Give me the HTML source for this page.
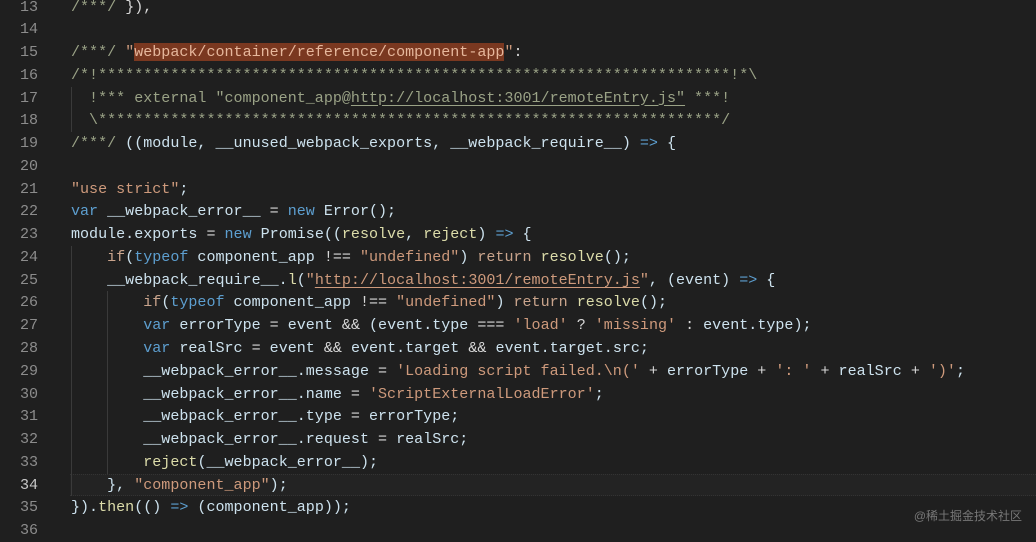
<!DOCTYPE html>
<html><head><meta charset="utf-8"><style>
html,body{margin:0;padding:0;background:#1f1f1f;width:1036px;height:537px;overflow:hidden}
#ed{position:absolute;left:0;top:-4.5px;width:1036px;font-family:"Liberation Mono",monospace;font-size:15.05px;}
.l{position:relative;height:22.78px;line-height:22.78px;white-space:pre;color:#cde2ee}
.n{position:absolute;left:0;width:38px;text-align:right;color:#8c8c8c}
.c{position:absolute;left:71px}
.cm{color:#9aa286}
.s{color:#ce9a7c}
.k{color:#5d9fd0}
.kw{color:#c9a48c}
.f{color:#dcdcaa}
.o{color:#d8d8d8}
.u{text-decoration:underline;text-underline-offset:3px}
.hl{background:#7a3820;color:#e6b79c}
.cur{position:absolute;left:70px;right:0;top:0;bottom:0;background:#232323;border-top:1px dotted #333;border-bottom:1px dotted #333}
.g{position:absolute;top:0;bottom:0;border-left:1px solid #3a3a3a}
.wm{position:absolute;right:14px;top:507px;font-family:"Liberation Sans","Noto Sans CJK SC",sans-serif;font-size:12px;color:#777}
</style></head><body>
<div id="ed">
<div class="l"><span class="n">13</span><span class="c"><span class="cm">/***/</span> <span class="o">}),</span></span></div>
<div class="l"><span class="n">14</span></div>
<div class="l"><span class="n">15</span><span class="c"><span class="cm">/***/</span> <span class="s">"<span class="hl">webpack/container/reference/component-app</span>"</span><span class="o">:</span></span></div>
<div class="l"><span class="n">16</span><span class="c cm">/*!**********************************************************************!*\</span></div>
<div class="l"><span class="n">17</span><span class="g" style="left:71px"></span><span class="c cm">  !*** external "component_app@<span class="u">http://localhost:3001/remoteEntry.js"</span> ***!</span></div>
<div class="l"><span class="n">18</span><span class="g" style="left:71px"></span><span class="c cm">  \*********************************************************************/</span></div>
<div class="l"><span class="n">19</span><span class="c"><span class="cm">/***/</span> ((module, __unused_webpack_exports, __webpack_require__) <span class="k">=&gt;</span> {</span></div>
<div class="l"><span class="n">20</span></div>
<div class="l"><span class="n">21</span><span class="c"><span class="s">"use strict"</span>;</span></div>
<div class="l"><span class="n">22</span><span class="c"><span class="k">var</span> __webpack_error__ <span class="o">=</span> <span class="k">new</span> Error();</span></div>
<div class="l"><span class="n">23</span><span class="c">module.exports <span class="o">=</span> <span class="k">new</span> Promise((<span class="f">resolve</span>, <span class="f">reject</span>) <span class="k">=&gt;</span> {</span></div>
<div class="l"><span class="n">24</span><span class="g" style="left:71px"></span><span class="c">    <span class="kw">if</span>(<span class="k">typeof</span> component_app <span class="o">!==</span> <span class="s">"undefined"</span>) <span class="kw">return</span> <span class="f">resolve</span>();</span></div>
<div class="l"><span class="n">25</span><span class="g" style="left:71px"></span><span class="c">    __webpack_require__.<span class="f">l</span>(<span class="s">"<span class="u">http://localhost:3001/remoteEntry.js</span>"</span>, (event) <span class="k">=&gt;</span> {</span></div>
<div class="l"><span class="n">26</span><span class="g" style="left:71px"></span><span class="g" style="left:107px"></span><span class="c">        <span class="kw">if</span>(<span class="k">typeof</span> component_app <span class="o">!==</span> <span class="s">"undefined"</span>) <span class="kw">return</span> <span class="f">resolve</span>();</span></div>
<div class="l"><span class="n">27</span><span class="g" style="left:71px"></span><span class="g" style="left:107px"></span><span class="c">        <span class="k">var</span> errorType <span class="o">=</span> event <span class="o">&amp;&amp;</span> (event.type <span class="o">===</span> <span class="s">'load'</span> <span class="o">?</span> <span class="s">'missing'</span> <span class="o">:</span> event.type);</span></div>
<div class="l"><span class="n">28</span><span class="g" style="left:71px"></span><span class="g" style="left:107px"></span><span class="c">        <span class="k">var</span> realSrc <span class="o">=</span> event <span class="o">&amp;&amp;</span> event.target <span class="o">&amp;&amp;</span> event.target.src;</span></div>
<div class="l"><span class="n">29</span><span class="g" style="left:71px"></span><span class="g" style="left:107px"></span><span class="c">        __webpack_error__.message <span class="o">=</span> <span class="s">'Loading script failed.\n('</span> <span class="o">+</span> errorType <span class="o">+</span> <span class="s">': '</span> <span class="o">+</span> realSrc <span class="o">+</span> <span class="s">')'</span>;</span></div>
<div class="l"><span class="n">30</span><span class="g" style="left:71px"></span><span class="g" style="left:107px"></span><span class="c">        __webpack_error__.name <span class="o">=</span> <span class="s">'ScriptExternalLoadError'</span>;</span></div>
<div class="l"><span class="n">31</span><span class="g" style="left:71px"></span><span class="g" style="left:107px"></span><span class="c">        __webpack_error__.type <span class="o">=</span> errorType;</span></div>
<div class="l"><span class="n">32</span><span class="g" style="left:71px"></span><span class="g" style="left:107px"></span><span class="c">        __webpack_error__.request <span class="o">=</span> realSrc;</span></div>
<div class="l"><span class="n">33</span><span class="g" style="left:71px"></span><span class="g" style="left:107px"></span><span class="c">        <span class="f">reject</span>(__webpack_error__);</span></div>
<div class="l"><span class="cur"></span><span class="n" style="color:#c8c8c8">34</span><span class="g" style="left:71px"></span><span class="c">    }, <span class="s">"component_app"</span>);</span></div>
<div class="l"><span class="n">35</span><span class="c">}).<span class="f">then</span>(() <span class="k">=&gt;</span> (component_app));</span></div>
<div class="l"><span class="n">36</span></div>
</div>
<div class="wm">@稀土掘金技术社区</div>
</body></html>
